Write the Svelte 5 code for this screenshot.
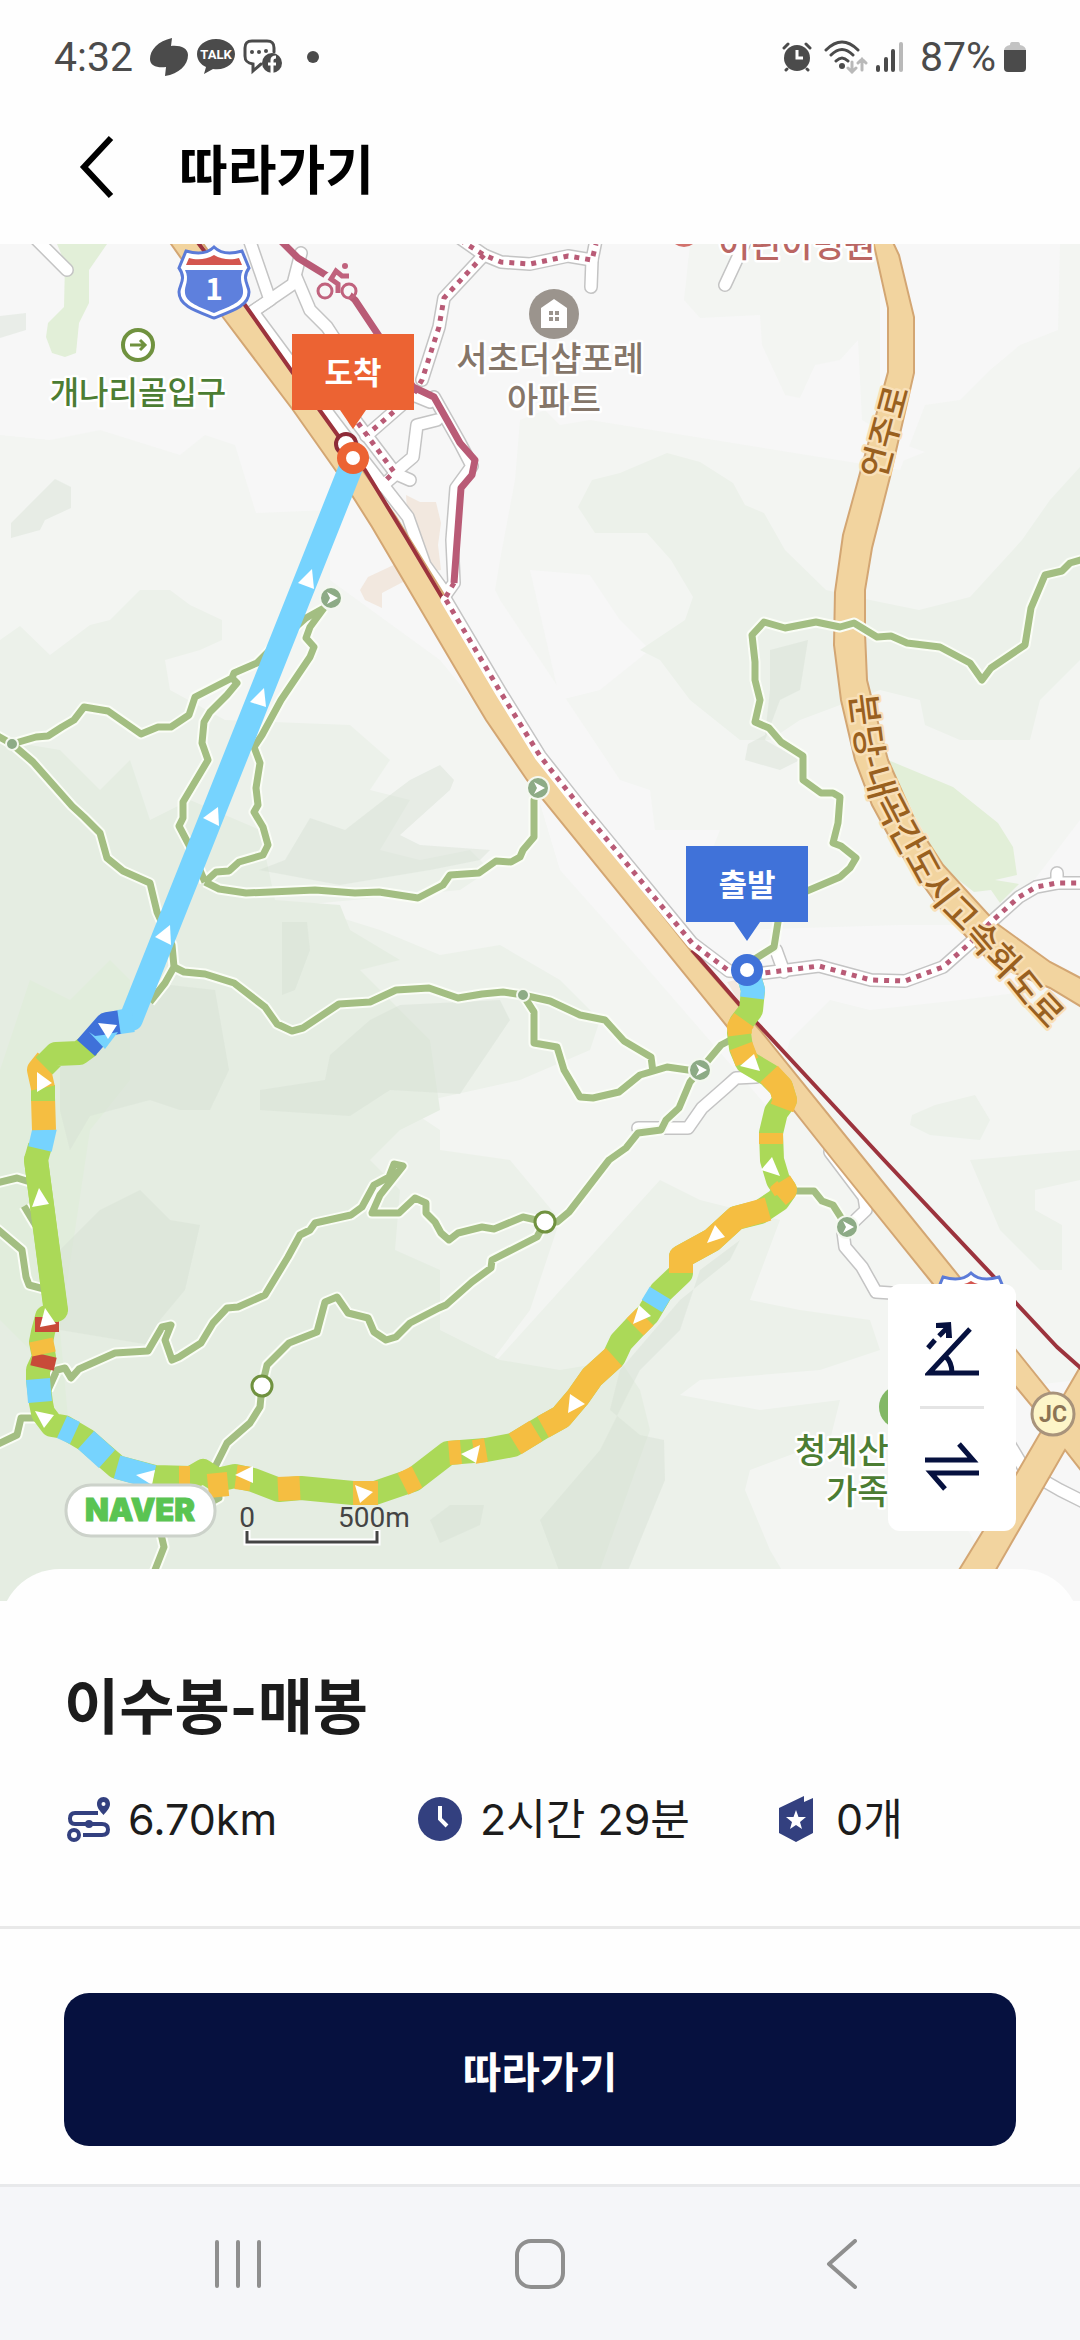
<script lang="ts">
	const stats = [
		{ icon: 'route', label: '거리', value: '6.70km' },
		{ icon: 'clock', label: '소요 시간', value: '2시간 29분' },
		{ icon: 'badge', label: '배지', value: '0개' }
	];

	// hill shading, light to dark
	const terrain = [
		{ level: 'light', points: '0,244 690,244 684,300 700,318 760,315 762,345 785,395 800,398 815,365 840,360 858,340 862,420 905,445 925,452 900,462 880,430 880,244 1060,244 1058,330 1020,345 990,370 960,400 925,405 900,470 590,420 560,425 545,410 520,420 515,480 500,560 495,590 500,600 560,690 620,780 650,790 655,830 720,830 700,880 740,930 900,925 1000,925 1080,820 1080,985 960,1000 870,1010 830,1000 790,1040 770,1110 640,960 560,870 530,770 440,660 330,580 330,510 256,513 235,445 205,435 180,455 100,430 50,440 0,435' },
		{ level: 'light', points: '530,570 590,575 620,620 650,650 600,690 560,700' },
		{ level: 'light', points: '895,1400 1080,1380 1080,1601 1010,1601 950,1500' },
		{ level: 'low', points: '592,480 620,473 667,453 700,462 733,483 745,505 764,513 785,550 826,590 870,600 919,610 970,597 1022,540 1050,500 1080,467 1080,660 1040,700 1030,740 960,740 925,725 920,700 880,690 800,720 770,740 740,740 690,700 660,660 640,650 685,620 693,597 671,560 647,533 595,533 578,507' },
		{ level: 'low', points: '0,640 20,626 50,655 90,625 110,620 140,590 170,590 190,605 222,620 222,640 200,650 165,660 170,690 225,720 350,725 390,760 370,790 410,800 380,850 420,860 470,850 490,870 460,890 300,905 380,930 440,955 500,945 560,980 600,1020 590,1050 520,1080 430,1100 410,1110 440,1130 440,1150 510,1160 560,1220 530,1310 470,1390 660,1180 700,1200 780,1220 750,1300 800,1310 870,1320 880,1350 820,1370 700,1380 680,1395 760,1410 840,1400 830,1440 750,1470 745,1490 770,1550 800,1601 0,1601' },
		{ level: 'low', points: '970,1160 1080,1150 1080,1180 1035,1190 1035,1210 1062,1225 1062,1270 1040,1270 1000,1230' },
		{ level: 'low', points: '912,1115 935,1105 975,1095 990,1120 980,1140 930,1135 910,1125' },
		{ level: 'mid', points: '0,740 60,750 100,790 130,760 150,820 190,800 260,830 275,900 340,905 350,930 400,960 360,970 430,1040 440,1110 400,1130 370,1160 400,1190 395,1250 440,1270 440,1330 500,1360 560,1370 620,1360 640,1390 650,1430 600,1570 600,1601 0,1601' },
		{ level: 'light-green', points: '30,980 70,1000 110,960 130,980 130,1080 90,1130 60,1330 70,1440 30,1350 0,1320 0,1070' },
		{ level: 'dark', points: '170,985 215,990 229,1070 210,1110 180,1110 150,1100 90,1116 70,1150 60,1110 60,1060' },
		{ level: 'dark', points: '100,1210 140,1190 170,1220 200,1225 185,1290 160,1320 150,1345 60,1330 60,1250' },
		{ level: 'dark', points: '259,870 285,860 310,818 345,830 390,795 410,780 440,765 454,780 450,790 400,835 420,845 490,850 480,860 430,870 340,885' },
		{ level: 'dark', points: '282,922 307,922 310,950 295,990 282,995' },
		{ level: 'dark', points: '370,1020 400,1005 500,1000 510,1020 460,1094 390,1090 350,1116 260,1110 260,1090 325,1080 330,1055' },
		{ level: 'dark', points: '11,523 55,479 71,487 71,508 45,520 40,530 11,538' },
		{ level: 'dark', points: '430,1520 450,1505 484,1505 480,1525 440,1543' },
		{ level: 'dark', points: '620,1370 680,1300 730,1260 740,1240 700,1270 680,1330 640,1370 600,1450 540,1520 570,1600 620,1590 665,1480 664,1440 640,1435 610,1410' },
		{ level: 'dark', points: '770,650 808,640 800,690 780,700 765,740 800,760 780,770 745,760 748,744 765,735 770,690' },
		{ level: 'dark', points: '0,316 26,313 26,330 0,338' },
		{ level: 'park', points: '57,244 65,263 64,307 48,323 46,337 52,353 65,357 76,353 79,323 89,303 89,270 107,244' },
		{ level: 'park', points: '888,760 953,787 998,823 1013,847 1017,875 995,880 1019,884 1000,903 991,890 974,892 943,868 915,825' },
		{ level: 'sand', points: '406,495 420,502 436,502 441,523 438,545 441,570 420,573 382,593 382,608 365,600 360,590 368,577 400,562 415,555 408,525' },
		{ level: 'sand', points: '727,982 735,980 745,995 740,1003' }
	];

	const streets = [
		'33,236 67,270',
		'248,236 270,300 252,312',
		'252,312 293,284 301,253',
		'296,277 310,310 327,327 342,350',
		'253,312 330,416 365,462 408,517 425,565 443,590',
		'437,420 417,425 413,457 394,473 410,480',
		'355,420 396,474 382,486',
		'366,436 413,395 430,402',
		'434,397 460,443 472,466 456,488 452,540 454,583 444,597',
		'457,236 484,255 501,262 530,264 568,256 592,260 596,240',
		'592,260 591,287',
		'484,255 444,298 439,327 422,380',
		'745,242 725,285',
		'776,950 784,972',
		'1057,883 1057,873',
		'638,1128 688,1128 702,1108 726,1087 736,1078 756,1077',
		'830,1152 864,1197 866,1210 843,1232 845,1247 862,1267 876,1292 1000,1300',
		'1010,1445 1025,1470 1060,1490 1090,1505'
	];

	const dashedRoad =
		'446,600 501,693 540,756 581,808 692,943 729,971 764,973 819,966 871,980 905,981 943,967 970,943 991,922 1019,897 1036,887 1057,883 1084,883';

	const footways = [
		'460,240 484,255 501,262 530,264 568,256 592,260 596,244',
		'484,255 444,298 439,327 422,380 413,395 368,434',
		'358,423 394,472 384,482',
		'454,583 444,600'
	];

	const trails = [
		'-4,735 12,744 36,737 48,736 62,727 74,720 84,707 108,711 141,734 158,727 171,727 189,715 195,697 232,678 234,673 257,663 270,650 306,618 324,608',
		'232,678 237,683 227,695 210,712 204,722 202,743 208,760 183,802 183,818 179,826 189,845 205,882',
		'324,608 310,627 306,638 314,647 310,657 281,700 262,735 254,747 260,763 256,788 258,805 254,812 263,827 268,845 263,855 239,862 229,871 216,872 205,882',
		'205,882 219,889 246,893 315,890 355,893 379,892 418,898 443,885 450,875 479,873 496,861 511,862 520,857 523,850 534,837 534,800 538,788',
		'12,744 33,762 72,806 84,817 100,833 107,858 123,871 150,883 157,912 172,945 174,967 165,983 150,1002',
		'174,967 184,972 205,974 234,983 265,1007 277,1024 292,1031 303,1028 339,1004 370,1002 396,990 429,988 458,998 482,994 503,992 523,995 550,1001 580,1015 605,1020 624,1041 651,1057 653,1072',
		'523,995 534,1012 534,1043 557,1047 564,1070 580,1097 593,1098 619,1092 640,1075 657,1070 667,1067 688,1070 700,1070 721,1045 740,1035',
		'700,1070 690,1082 679,1108 666,1120 661,1130 638,1133 626,1148 609,1160 569,1212 557,1222 545,1222',
		'545,1222 523,1217 494,1229 482,1227 458,1233 449,1240 441,1233 435,1222 426,1213 426,1203 415,1198 399,1213 372,1213 380,1195 403,1166 394,1164 389,1177 374,1185 362,1207 351,1215 315,1223 310,1230 300,1235 288,1257 265,1295 238,1307 227,1308 213,1323 201,1343 179,1357 172,1360 165,1340 171,1325 162,1327 148,1351 115,1353 79,1369 71,1378 65,1368 57,1370 48,1390',
		'545,1222 537,1237 492,1260 491,1268 472,1282 446,1305 439,1308 410,1323 396,1337 386,1340 374,1332 368,1318 348,1313 337,1297 325,1302 317,1332 289,1343 267,1365 262,1386 260,1407 250,1423 227,1443 215,1467 219,1498 160,1530 164,1547 153,1575',
		'-4,1183 17,1178 30,1182',
		'24,1206 36,1226',
		'-4,1228 22,1250 26,1277 29,1285 44,1289',
		'-4,1445 17,1435 21,1418 40,1418',
		'1084,559 1070,563 1062,571 1045,575 1031,608 1025,645 991,668 982,680 970,663 940,647 907,643 891,636 877,637 854,623 840,627 816,622 785,628 764,622 752,635 755,662 755,680 760,700 755,722 769,728 781,742 803,756 803,780 821,793 833,793 840,797 838,823 833,843 841,846 856,858 850,868 840,877 807,891 785,900 778,922 774,947 750,962',
		'790,1191 814,1191 822,1201 833,1205 847,1227'
	];

	const routeLine =
		'747,970 753,990 751,1010 741,1023 739,1033 741,1048 747,1062 769,1075 781,1087 785,1100 776,1112 771,1133 772,1160 778,1180 785,1190 778,1200 760,1212 736,1218 712,1240 681,1257 681,1273 661,1292 648,1314 635,1327 621,1342 614,1357 592,1377 578,1397 561,1417 543,1427 513,1445 486,1450 448,1453 413,1480 375,1493 353,1493 301,1488 279,1490 253,1480 235,1476 217,1480 203,1471 191,1478 155,1477 117,1467 86,1440 64,1427 52,1425 43,1413 41,1403 38,1380 38,1370 44,1357 41,1342 43,1332 47,1317';

	// stretches of the walked line, coloured by slope
	const slopes = [
		{ slope: 'flat', points: '747,970 753,990 752,998' },
		{ slope: 'steep', points: '744,1020 739,1027 740,1035' },
		{ slope: 'steep', points: '741,1046 747,1062' },
		{ slope: 'steep', points: '769,1074 781,1087 785,1100 782,1108' },
		{ slope: 'steep', points: '771,1133 771,1144' },
		{ slope: 'steep', points: '780,1182 785,1190 778,1196' },
		{ slope: 'steep', points: '768,1209 736,1218 712,1240 681,1257 681,1273' },
		{ slope: 'flat', points: '660,1293 652,1306' },
		{ slope: 'steep', points: '645,1317 635,1327' },
		{ slope: 'steep', points: '614,1357 592,1377 578,1397 561,1417 543,1427' },
		{ slope: 'steep', points: '536,1431 515,1444' },
		{ slope: 'steep', points: '486,1450 474,1452' },
		{ slope: 'steep', points: '461,1452 449,1453' },
		{ slope: 'steep', points: '417,1477 403,1484' },
		{ slope: 'steep', points: '378,1493 353,1493' },
		{ slope: 'steep', points: '300,1488 278,1489' },
		{ slope: 'steep', points: '251,1479 236,1477' },
		{ slope: 'steep', points: '228,1484 208,1486' },
		{ slope: 'steep', points: '190,1478 179,1478' },
		{ slope: 'flat', points: '153,1477 117,1467' },
		{ slope: 'flat', points: '107,1459 86,1440' },
		{ slope: 'flat', points: '75,1433 62,1427' },
		{ slope: 'flat', points: '40,1402 38,1379' },
		{ slope: 'hard', points: '42,1368 45,1355' },
		{ slope: 'steep', points: '44,1354 41,1340' },
		{ slope: 'hard', points: '47,1332 47,1317' }
	];

	const returnSlopes = [
		{ slope: 'easy', points: '56,1313 36,1160 40,1146' },
		{ slope: 'flat', points: '40,1149 45,1127' },
		{ slope: 'steep', points: '44,1130 43,1098' },
		{ slope: 'easy', points: '43,1101 43,1085' },
		{ slope: 'steep', points: '43,1088 39,1070 47,1060' },
		{ slope: 'easy', points: '44,1066 56,1054 79,1053 90,1045' },
		{ slope: 'down', points: '86,1048 107,1024 120,1022' }
	];

	const arrows = [
		'312,569 298,583 314,589',
		'264,688 250,702 266,707',
		'218,807 203,818 219,826',
		'170,925 155,937 171,945',
		'98,1023 117,1025 108,1039',
		'37,1072 52,1083 37,1092',
		'39,1188 49,1204 32,1207',
		'45,1308 56,1324 40,1327',
		'35,1411 54,1415 44,1428',
		'155,1470 136,1475 152,1485',
		'253,1466 235,1475 253,1483',
		'355,1485 373,1492 360,1503',
		'480,1445 461,1454 476,1463',
		'570,1394 585,1404 568,1413',
		'639,1305 651,1316 633,1324',
		'715,1225 725,1237 707,1243',
		'772,1157 761,1170 780,1176',
		'754,1054 740,1066 760,1071'
	];

	const gates = [
		[331, 598],
		[538, 788],
		[700, 1070],
		[847, 1227]
	];

	const pins = [
		{ label: '도착', x: 353, y: 458, kind: 'finish' },
		{ label: '출발', x: 747, y: 970, kind: 'start' }
	];
</script>

{#snippet shield()}
	<path class="shield-edge" d="M0,-36 C-7,-29 -18,-29 -28,-32 L-35,-15 C-27,-4 -35,2 -35,9 C-35,23 -18,28 0,35 C18,28 35,23 35,9 C35,2 27,-4 35,-15 L28,-32 C18,-29 7,-29 0,-36 Z" />
	<path class="shield-body" d="M-29,-13 C-24,-3 -30,3 -29,10 C-28,20 -14,24 0,30 C14,24 28,20 29,10 C30,3 24,-3 29,-13 Z" />
	<path class="shield-top" d="M0,-28 C-8,-23 -18,-23 -25,-25 L-28,-18 H28 L25,-25 C18,-23 8,-23 0,-28 Z" />
{/snippet}

<div class="screen">
	<div class="status">
		<div class="status__group">
			<span>4:32</span>
			<svg class="status__app" width="40" height="40" viewBox="0 0 40 40">
				<path d="M23,1 C9,4 1,13 1,22 C1,29 8,31 17,30 L16,39 C30,37 39,28 39,18 C39,11 31,8 22,9 Z" />
			</svg>
			<svg width="38" height="36" viewBox="0 0 38 36">
				<path d="M19,0 C8,0 0,7 0,15 C0,21 4,26 9,28 L7,35 L16,30 C29,32 38,24 38,15 C38,7 30,0 19,0 Z" />
				<text class="talk" x="19" y="20">TALK</text>
			</svg>
			<svg class="status__chat" width="40" height="36" viewBox="0 0 40 36">
				<path class="line" d="M18,25 L10,32 V25 C4,24 2,22 2,17 V9 C2,4 4,2 9,2 H24 C29,2 31,4 31,9 V13" />
				<circle cx="9" cy="13" r="2" /><circle cx="16" cy="13" r="2" /><circle cx="23" cy="12" r="2" />
				<circle cx="29" cy="24" r="10" />
				<path class="cut" d="M29,34 V21 Q29,18 33,18 M25,25 H33" />
			</svg>
			<svg class="status__more" width="12" height="12" viewBox="0 0 12 12"><circle cx="6" cy="6" r="6" /></svg>
		</div>
		<div class="status__group">
			<svg width="30" height="30" viewBox="0 0 30 30">
				<circle cx="15" cy="16" r="13" />
				<path class="line" d="M2,6 L6,2 M28,6 L24,2 M5,27 L4,28 M25,27 L26,28" />
				<path class="cut" d="M15,8 V16 H21" />
			</svg>
			<svg class="status__wifi" width="44" height="34" viewBox="0 0 44 34">
				<path class="line" d="M2,10 Q18,-6 34,10 M7,15 Q18,4 29,15 M12,21 Q18,15 24,21" />
				<circle cx="18" cy="26" r="3" />
				<path class="line line--dim" d="M28,22 V32 M24,28 L28,32 L32,28 M38,30 V19 M34,23 L38,19 L42,23" />
			</svg>
			<svg class="status__signal" width="28" height="30" viewBox="0 0 28 30">
				<path class="bar" d="M2,25 V28 M10,17 V28 M17,9 V28" />
				<path class="bar bar--dim" d="M25,2 V28" />
			</svg>
			<span>87%</span>
			<svg class="status__battery" width="22" height="30" viewBox="0 0 22 30">
				<path class="dim" d="M6,3 Q6,0 8,0 H14 Q16,0 16,3 Q22,4 22,9 H0 Q0,4 6,3 Z" />
				<path d="M0,8 H22 V26 Q22,30 18,30 H4 Q0,30 0,26 Z" />
			</svg>
		</div>
	</div>

	<header class="header">
		<button class="header__back" aria-label="뒤로">
			<svg width="36" height="64" viewBox="0 0 36 64"><path d="M32,3 L5,32 L32,61" /></svg>
		</button>
		<h1>따라가기</h1>
	</header>

	<div class="map">
		<svg class="map__canvas" viewBox="0 244 1080 1357" role="img" aria-label="이수봉-매봉 코스 지도">
			{#each terrain as area}
				<polygon class="terrain terrain--{area.level}" points={area.points} />
			{/each}

			{#each streets as points}<polyline class="street-edge" {points} />{/each}
			<polyline class="street-edge" points={dashedRoad} />
			{#each streets as points}<polyline class="street" {points} />{/each}

			<polygon class="highway" points="165,236 171,244 222,316 293,410 341,478 372,527 474,700 486,720 527,780 726,1025 833,1160 933,1284 1016,1387 1040,1416 1060,1405 1016,1350 962,1280 865,1160 760,1030 692,952 546,768 503,700 443,593 396,517 341,440 245,305 198,236" />
			<polygon class="highway" points="872,236 888,308 888,372 860,473 843,535 835,592 834,645 841,700 855,760 872,805 891,840 939,907 991,963 1050,988 1090,1012 1090,983 1050,962 996,923 943,865 917,825 888,760 872,700 867,680 865,633 865,590 872,548 890,477 914,373 914,317 899,255 890,236" />
			<polygon class="highway" points="940,1601 983,1531 1039,1435 1065,1393 1090,1350 1090,1482 1065,1450 978,1601" />
			<polygon class="highway-fill" points="1018,1384 1036,1408 1042,1428 1066,1440 1070,1400 1050,1395 1030,1370" />

			<polyline class="rail" points="196,240 245,305 293,373 339,437 365,470 406,537 443,599" />
			<polyline class="rail" points="692,950 740,1005 757,1023 884,1160 995,1278 1016,1303 1057,1347 1084,1371" />

			<polyline class="street street--over" points={dashedRoad} />
			<polyline class="footway" points={dashedRoad} />
			{#each footways as points}<polyline class="footway" {points} />{/each}
			<polyline class="cycleway" points="280,240 298,258 329,277 355,300 377,333 413,387 434,397 460,443 475,460 472,475 461,488 454,583" />

			{#each trails as points}<polyline class="trail-halo" {points} />{/each}
			{#each trails as points}<polyline class="trail" {points} />{/each}

			{#each gates as [x, y]}
				<circle class="gate" cx={x} cy={y} r="11" />
				<path class="gate-arrow" d="M{x - 4},{y - 6} L{x + 7},{y} L{x - 4},{y + 6} L{x - 1},{y} Z" />
			{/each}
			<circle class="gate" cx="12" cy="744" r="6" />
			<circle class="gate" cx="523" cy="995" r="6" />
			<circle class="stop" cx="262" cy="1386" r="10" />
			<circle class="stop" cx="545" cy="1222" r="10" />

			<g transform="translate(214 283)">
				{@render shield()}
				<text class="shield-number" y="17">1</text>
			</g>
			<g transform="translate(971 1309)">{@render shield()}</g>

			<g class="bike">
				<circle class="bike__gap" cx="337" cy="286" r="16" />
				<circle cx="325" cy="291" r="7" /><circle cx="349" cy="291" r="7" />
				<path class="bike__rider" d="M349,276 L342,276 L336,271 L331,279 L338,284 V293" />
				<circle class="bike__head" cx="345" cy="266" r="3" />
			</g>

			<circle class="entrance" cx="138" cy="345" r="15" />
			<path class="entrance-arrow" d="M130,345 H145 M140,340 L145,345 L140,350" />
			<text class="label label--green" x="138" y="404">개나리골입구</text>

			<circle class="building" cx="554" cy="314" r="25" />
			<path class="building-house" d="M541,328 V308 L554,299 L567,308 V328 Z" />
			<path class="building-window" d="M549,311 h4 v4 h-4z M555,311 h4 v4 h-4z M549,317 h4 v4 h-4z M555,317 h4 v4 h-4z" />
			<text class="label label--brown">
				<tspan x="554" y="371">서초더샵포레</tspan>
				<tspan x="554" y="412">아파트</tspan>
			</text>

			<circle class="hospital" cx="684" cy="232" r="15" />
			<text class="label label--red" x="797" y="257">어린이병원</text>

			<text class="label label--road" transform="translate(897 435) rotate(-75)">언주로</text>
			<path id="expressway" class="guide" d="M850,695 L857,749 L869,792 L885,823 L900,850 L917,881 L937,907 L956,926 L979,953 L998,973 L1018,998 L1070,1054" />
			<text class="label label--road label--path"><textPath href="#expressway">분당-내곡간도시고속화도로</textPath></text>

			<circle class="park-spot" cx="901" cy="1407" r="22" />
			<text class="label label--green label--left">
				<tspan x="795" y="1463">청계산</tspan>
				<tspan x="826" y="1504">가족</tspan>
			</text>

			<circle class="junction" cx="1053" cy="1414" r="21" />
			<text class="junction-name" x="1053" y="1422">JC</text>

			<polyline class="route easy" points={routeLine} />
			{#each slopes as part}<polyline class="route route--part {part.slope}" points={part.points} />{/each}
			<polyline class="route easy" points="56,1310 36,1160" />
			{#each returnSlopes as part}<polyline class="route route--part {part.slope}" points={part.points} />{/each}
			<path class="flat-spill" d="M89,1032 L95,1036 L103,1035 L118,1032 L105,1049 Z" />
			<polyline class="route flat" points="131,1019 351,467" />
			<polyline class="route route--part flat" points="119,1022 133,1020" />
			{#each arrows as points}<polygon class="arrow" {points} />{/each}

			<circle class="station" cx="346" cy="444" r="10" />
			{#each pins as pin}
				<g class="pin pin--{pin.kind}" transform="translate({pin.x} {pin.y})">
					<path d="M-61,-124 H61 V-48 H13 L0,-29 L-13,-48 H-61 Z" />
					<circle r="16" />
					<circle class="pin__hole" r="7" />
					<text y="-74">{pin.label}</text>
				</g>
			{/each}

			<rect class="brand" x="66" y="1485" width="149" height="51" rx="25" />
			<text class="brand-name" x="140" y="1521">NAVER</text>
			<text class="scale-text" x="247" y="1527">0</text>
			<text class="scale-text" x="374" y="1527">500m</text>
			<path class="scale-halo" d="M247,1530 V1542 H377 V1530" />
			<path class="scale" d="M247,1531 V1542 H377 V1531" />
		</svg>

		<div class="controls">
			<button aria-label="경사도">
				<svg width="54" height="54" viewBox="0 0 54 54">
					<path d="M45,7 L4,51 H54 M20,34 Q27,40 27,51" />
					<path d="M3,26 L10,18 M14,14 L24,4" />
					<path class="solid" d="M11,1 L26,0 L27,16 L21,16 L21,6 L11,6 Z" />
				</svg>
			</button>
			<hr />
			<button aria-label="방향 전환">
				<svg width="54" height="54" viewBox="0 0 54 54">
					<path d="M0,21 H48 L34,5 M54,34 H6 L20,50" />
				</svg>
			</button>
		</div>
	</div>

	<section class="sheet">
		<h2>이수봉-매봉</h2>
		<ul class="stats">
			{#each stats as stat}
				<li>
					<svg width="48" height="48" viewBox="0 0 48 48" role="img" aria-label={stat.label}>
						{#if stat.icon === 'route'}
							<path class="track" d="M34,18 H11 Q6,18 6,23.500 Q6,29 11,29 H38 Q44,29 44,34.500 Q44,40 38,40 H19" />
							<circle cx="25" cy="29" r="4" />
							<circle class="ring" cx="10" cy="40" r="5" />
							<path fill-rule="evenodd" d="M39.500,2 C35.500,2 33,5 33,9 C33,13 36,16 39.500,20 C43,16 46,13 46,9 C46,5 43.500,2 39.500,2 Z M39.500,7 a2,2 0 1 1 0,4 a2,2 0 1 1 0,-4 Z" />
						{:else if stat.icon === 'clock'}
							<circle cx="24" cy="24" r="22" />
							<path class="hands" d="M24,11 V24 L31,31" />
						{:else}
							<path d="M7,13 L32,1 V7 L41,3 V38 L24,47 L7,38 Z" />
							<path class="star" d="M24,15 L26.500,22 H34 L28,27 L30,34 L24,30 L18,34 L20,27 L14,22 H21.500 Z" />
						{/if}
					</svg>
					<span>{stat.value}</span>
				</li>
			{/each}
		</ul>
	</section>

	<div class="footer">
		<button class="follow">따라가기</button>
	</div>

	<nav class="navbar">
		<button aria-label="최근 앱">
			<svg width="50" height="50" viewBox="0 0 50 50"><path d="M4,3 V47 M25,3 V47 M46,3 V47" /></svg>
		</button>
		<button aria-label="홈">
			<svg width="50" height="50" viewBox="0 0 50 50"><rect x="2" y="2" width="46" height="46" rx="14" /></svg>
		</button>
		<button aria-label="뒤로 가기">
			<svg width="50" height="50" viewBox="0 0 50 50"><path d="M38,2 L12,25 L38,48" /></svg>
		</button>
	</nav>
</div>

<style>
	:global(body) {
		margin: 0;
		background: #fefefe;
	}

	.screen {
		display: flex;
		flex-direction: column;
		min-height: 100vh;
		color: #1c1c1c;
		font-family: Inter, 'Noto Sans CJK KR', sans-serif;
	}

	button {
		padding: 0;
		border: 0;
		background: none;
		font: inherit;
		cursor: pointer;
	}

	h1,
	h2,
	ul {
		margin: 0;
		padding: 0;
	}

	svg {
		display: block;
		flex: none;
	}

	/* status bar */
	.status {
		display: flex;
		justify-content: space-between;
		box-sizing: border-box;
		height: 90px;
		padding: 24px 54px 0;
		color: #4b4b4b;
		font-family: Roboto, sans-serif;
		font-size: 41px;
		line-height: 66px;
	}

	.status__group {
		display: flex;
		align-items: center;
	}

	.status svg {
		fill: #4b4b4b;
	}

	.status__app {
		margin: 0 8px 0 16px;
	}

	.status__chat {
		margin-left: 8px;
	}

	.status__more {
		margin-left: 24px;
	}

	.status__wifi {
		margin: 0 8px 0 12px;
	}

	.status__signal {
		margin-right: 16px;
	}

	.status__battery {
		margin-left: 8px;
	}

	.status .talk {
		fill: #fff;
		font-size: 13px;
		font-weight: 700;
		text-anchor: middle;
	}

	.status .line {
		fill: none;
		stroke: #4b4b4b;
		stroke-width: 3;
		stroke-linecap: round;
	}

	.status .line--dim {
		stroke: #b9b9b9;
	}

	.status .cut {
		fill: none;
		stroke: #fff;
		stroke-width: 3;
	}

	.status .bar {
		fill: none;
		stroke: #4b4b4b;
		stroke-width: 4;
		stroke-linecap: round;
	}

	.status .bar--dim {
		stroke: #b9b9b9;
	}

	.status .dim {
		fill: #c3c3c3;
	}

	/* title bar */
	.header {
		display: flex;
		align-items: center;
		gap: 64px;
		height: 154px;
		padding: 0 79px;
		color: #000;
	}

	.header__back path {
		fill: none;
		stroke: #000;
		stroke-width: 6;
	}

	.header h1 {
		font-family: 'Noto Sans CJK KR', sans-serif;
		font-size: 53px;
		font-weight: 700;
		line-height: 64px;
	}

	/* map */
	.map {
		position: relative;
		background: #f3f5f2;
	}

	.map__canvas {
		width: 100%;
		height: auto;
		font-family: 'Noto Sans CJK KR', sans-serif;
	}

	.map__canvas polyline {
		fill: none;
		stroke-linejoin: round;
	}

	.terrain--light {
		fill: #f7f7f7;
	}

	.terrain--low {
		fill: #ecf1ea;
	}

	.terrain--mid {
		fill: #e5ede2;
	}

	.terrain--light-green {
		fill: #e1eddc;
	}

	.terrain--dark {
		fill: #d4dfd3;
		opacity: 0.4;
	}

	.terrain--park {
		fill: #e2efd8;
	}

	.terrain--sand {
		fill: #f2e8df;
	}

	.street-edge {
		stroke: #c4c4c4;
		stroke-width: 14;
		stroke-linecap: round;
	}

	.street {
		stroke: #fff;
		stroke-width: 11;
		stroke-linecap: round;
	}

	.highway {
		fill: #f2d49f;
		stroke: #d3a673;
		stroke-width: 2;
	}

	.highway-fill {
		fill: #f2d49f;
	}

	.rail {
		stroke: #9c333d;
		stroke-width: 4;
	}

	.footway {
		stroke: #b95b76;
		stroke-width: 5;
		stroke-dasharray: 5 6;
	}

	.cycleway {
		stroke: #b95b76;
		stroke-width: 7;
	}

	.trail-halo {
		stroke: #fafdf6;
		stroke-width: 11;
	}

	.trail {
		stroke: #a3be82;
		stroke-width: 7;
	}

	.gate {
		fill: #8dab86;
		stroke: #f4f8f0;
		stroke-width: 2;
	}

	.gate-arrow {
		fill: #fff;
	}

	.stop {
		fill: #fff;
		stroke: #70923f;
		stroke-width: 3;
	}

	.shield-edge {
		fill: #fff;
		stroke: #5b7bd8;
		stroke-width: 3;
	}

	.shield-body {
		fill: #5e80dd;
	}

	.shield-top {
		fill: #d4564f;
	}

	.shield-number {
		fill: #fff;
		font-size: 30px;
		font-weight: 700;
		text-anchor: middle;
	}

	.bike circle,
	.bike path {
		fill: none;
		stroke: #c0627d;
		stroke-width: 3;
	}

	.bike .bike__rider {
		stroke-width: 5;
	}

	.bike .bike__gap {
		fill: #f7f7f7;
		stroke: none;
	}

	.bike .bike__head {
		fill: #c0627d;
		stroke: none;
	}

	.entrance {
		fill: #fff;
		stroke: #70923f;
		stroke-width: 4;
	}

	.entrance-arrow {
		fill: none;
		stroke: #70923f;
		stroke-width: 3;
	}

	.label {
		stroke: #fff;
		stroke-width: 5;
		stroke-linejoin: round;
		paint-order: stroke;
		font-size: 34px;
		font-weight: 500;
		text-anchor: middle;
	}

	.label--green {
		fill: #4c7d33;
		font-size: 32px;
	}

	.label--brown {
		fill: #857669;
	}

	.label--red {
		fill: #ba6663;
	}

	.label--road {
		fill: #99601f;
		stroke: #f9e0b8;
	}

	.label--left {
		font-size: 34px;
		text-anchor: start;
	}

	.label--path {
		font-size: 35px;
		text-anchor: start;
	}

	.guide {
		fill: none;
	}

	.building {
		fill: #9b948d;
	}

	.building-house {
		fill: #fff;
	}

	.building-window {
		fill: #9b948d;
	}

	.hospital {
		fill: #d2726d;
	}

	.park-spot {
		fill: #82b866;
	}

	.junction {
		fill: #fdf5c8;
		stroke: #a8937b;
		stroke-width: 3;
	}

	.junction-name {
		fill: #8c7454;
		font-family: Roboto, sans-serif;
		font-size: 23px;
		font-weight: 700;
		text-anchor: middle;
	}

	.route {
		stroke-width: 24;
		stroke-linecap: round;
	}

	.route--part {
		stroke-linecap: butt;
	}

	.easy {
		stroke: #abd958;
	}

	.steep {
		stroke: #f5be41;
	}

	.flat {
		stroke: #76d3fe;
	}

	.hard {
		stroke: #c84a39;
	}

	.down {
		stroke: #3f71d9;
	}

	.flat-spill {
		fill: #76d3fe;
	}

	.arrow {
		fill: #fff;
	}

	.station {
		fill: #fff;
		stroke: #8e2b38;
		stroke-width: 4;
	}

	.pin--finish {
		fill: #ec6333;
	}

	.pin--start {
		fill: #4072d9;
	}

	.pin__hole {
		fill: #fff;
	}

	.pin text {
		fill: #fff;
		font-size: 31px;
		font-weight: 700;
		text-anchor: middle;
	}

	.brand {
		fill: #fff;
		stroke: #ccd2ca;
		stroke-width: 3;
	}

	.brand-name {
		fill: #5ac452;
		stroke: #5ac452;
		stroke-width: 1;
		font-family: Inter, sans-serif;
		font-size: 31px;
		font-weight: 900;
		text-anchor: middle;
	}

	.scale-text {
		fill: #444;
		font-family: Roboto, sans-serif;
		font-size: 28px;
		text-anchor: middle;
	}

	.scale-halo {
		fill: none;
		stroke: #fff;
		stroke-width: 7;
	}

	.scale {
		fill: none;
		stroke: #444;
		stroke-width: 3;
	}

	.controls {
		position: absolute;
		right: 64px;
		bottom: 70px;
		display: flex;
		flex-direction: column;
		width: 128px;
		border-radius: 12px;
		background: #fff;
	}

	.controls button {
		display: flex;
		align-items: center;
		justify-content: center;
		height: 122px;
		padding-top: 8px;
		box-sizing: border-box;
	}

	.controls button:last-child {
		padding: 0 0 8px;
	}

	.controls path {
		fill: none;
		stroke: #06113f;
		stroke-width: 5;
	}

	.controls .solid {
		fill: #06113f;
		stroke: none;
	}

	.controls hr {
		width: 64px;
		height: 3px;
		margin: 0 auto;
		border: 0;
		background: #e4e4e4;
	}

	/* course summary */
	.sheet {
		position: relative;
		margin-top: -32px;
		padding: 98px 64px 83px;
		border-radius: 60px 60px 0 0;
		background: #fefefe;
	}

	.sheet h2 {
		font-size: 60px;
		font-weight: 700;
		line-height: 80px;
	}

	.stats {
		display: grid;
		grid-template-columns: 88fr 89fr 61fr;
		margin-top: 48px;
		list-style: none;
	}

	.stats li {
		display: flex;
		align-items: center;
		gap: 16px;
		font-size: 43px;
		line-height: 48px;
		white-space: nowrap;
	}

	.stats svg {
		fill: #33407f;
	}

	.stats .track,
	.stats .ring {
		fill: none;
		stroke: #33407f;
		stroke-width: 4;
	}

	.stats .hands {
		fill: none;
		stroke: #fff;
		stroke-width: 4;
	}

	.stats .star {
		fill: #fff;
	}

	.footer {
		padding: 64px 64px 38px;
		border-top: 3px solid #e9e9e9;
	}

	.follow {
		width: 100%;
		height: 153px;
		border-radius: 25px;
		background: #06113f;
		color: #fff;
		font-size: 42px;
		font-weight: 700;
	}

	/* system navigation */
	.navbar {
		display: grid;
		grid-template-columns: repeat(3, 1fr);
		height: 153px;
		padding: 0 8%;
		border-top: 3px solid #e8e9eb;
		background: #f5f6f9;
	}

	.navbar button {
		display: flex;
		align-items: center;
		justify-content: center;
	}

	.navbar path,
	.navbar rect {
		fill: none;
		stroke: #8f8f8f;
		stroke-width: 4;
		stroke-linecap: round;
		stroke-linejoin: round;
	}
</style>
